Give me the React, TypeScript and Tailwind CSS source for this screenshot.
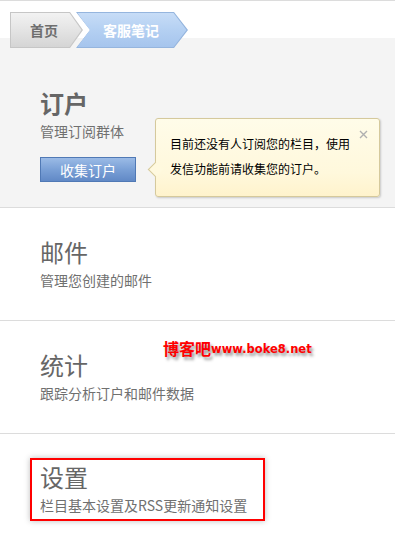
const cjk = "font-['Noto_Sans_CJK_SC','Noto_Sans',sans-serif]";

const sections = [
  { id: "mail", title: "邮件", desc: "管理您创建的邮件" },
  { id: "stats", title: "统计", desc: "跟踪分析订户和邮件数据" },
];

function Breadcrumb() {
  return (
    <div className="flex pl-[10px] pt-[12px]">
      <div className="h-[36px] w-[73px] bg-[#c6c6c6] [clip-path:polygon(0_0,60px_0,73px_18px,60px_36px,0_36px)]">
        <div className="flex h-full w-full items-center bg-[linear-gradient(to_bottom,#f3f3f3,#e4e4e4_50%,#d4d4d4)] pl-[20px] text-[14px] font-bold leading-none text-[#6e6e6e] [clip-path:polygon(1px_1px,59.5px_1px,71.5px_18px,59.5px_35px,1px_35px)]">
          首页
        </div>
      </div>
      <div className="-ml-[7px] h-[36px] w-[112px] bg-[#95b5de] [clip-path:polygon(0_0,98px_0,112px_18px,98px_36px,0_36px,14px_18px)]">
        <div className="flex h-full w-full items-center bg-[linear-gradient(to_bottom,#c8ddf7,#b4d0f2_50%,#a5c4ed)] pl-[27px] text-[14px] font-bold leading-none text-white [clip-path:polygon(1.5px_1px,97.5px_1px,110.5px_18px,97.5px_35px,1.5px_35px,13.5px_18px)]">
          客服笔记
        </div>
      </div>
    </div>
  );
}

function Tooltip() {
  return (
    <div className="absolute left-[155px] top-[68px] h-[79px] w-[225px] rounded-[3px] border border-[#d5c99c] bg-[linear-gradient(to_bottom,#fffce9,#fff8dc_70%,#fff3cc)] shadow-[1px_1px_2px_rgba(0,0,0,0.18)]">
      <div className="absolute -left-[6px] top-[45px] h-[11px] w-[11px] rotate-45 border-b border-l border-[#d5c99c] bg-[#fff9df]" />
      <svg className="absolute right-[11px] top-[11px]" width="9" height="9" viewBox="0 0 9 9">
        <path d="M1 1L8 8M8 1L1 8" stroke="#b0b0b0" strokeWidth="1.4" />
      </svg>
      <p className="relative pl-[14px] pt-[12px] text-[12px] leading-[25px] text-black">
        目前还没有人订阅您的栏目，使用
        <br />
        发信功能前请收集您的订户。
      </p>
    </div>
  );
}

export default function App() {
  return (
    <div className={`w-[395px] min-h-[534px] bg-white ${cjk}`}>
      <header className="h-[50px] border-t border-[#dcdcdc] bg-[linear-gradient(to_bottom,#fff_0,#fff_37px,#f4f4f4_37px)]">
        <div className="-mt-[1px]">
          <Breadcrumb />
        </div>
      </header>

      <section className="relative h-[158px] border-b border-[#dcdcdc] bg-[#f4f4f4] pl-[40px] pt-[41px]">
        <h2 className="text-[24px] leading-[24px] font-bold text-[#666]">订户</h2>
        <p className="mt-[9px] text-[14px] leading-[14px] text-[#707070]">管理订阅群体</p>
        <button className="mt-[19px] h-[25px] w-[96px] border border-[#5079b5] bg-[linear-gradient(to_bottom,#9bbbe6,#7aa0d6_50%,#6189c6)] text-[14px] leading-none text-white">
          收集订户
        </button>
        <Tooltip />
      </section>

      {sections.map((s) => (
        <section key={s.id} className="relative h-[113px] border-b border-[#dcdcdc] pl-[40px] pt-[32px]">
          <h2 className="text-[24px] leading-[24px] text-[#666]">{s.title}</h2>
          <p className="mt-[9px] text-[14px] leading-[14px] text-[#707070]">{s.desc}</p>
          {s.id === "stats" && (
            <div className="absolute left-[163px] top-[17px] flex items-end whitespace-nowrap font-bold text-[#ff0000] [text-shadow:2px_3px_3px_#999]">
              <span className="text-[16px] leading-[20px]">博客吧</span>
              <span className="font-['DejaVu_Sans',sans-serif] text-[11.5px] leading-[18px]">www.boke8.net</span>
            </div>
          )}
        </section>
      ))}

      <section className="pl-[30px] pt-[24px]">
        <div className="w-[235px] border-2 border-[#ff0000] pb-[7px] pl-[8px] pt-[5px] shadow-[0_0_6px_#bdbdbd]">
          <h2 className="text-[24px] leading-[24px] text-[#666]">设置</h2>
          <p className="mt-[9px] text-[14px] leading-[14px] text-[#707070]">栏目基本设置及RSS更新通知设置</p>
        </div>
      </section>
    </div>
  );
}
